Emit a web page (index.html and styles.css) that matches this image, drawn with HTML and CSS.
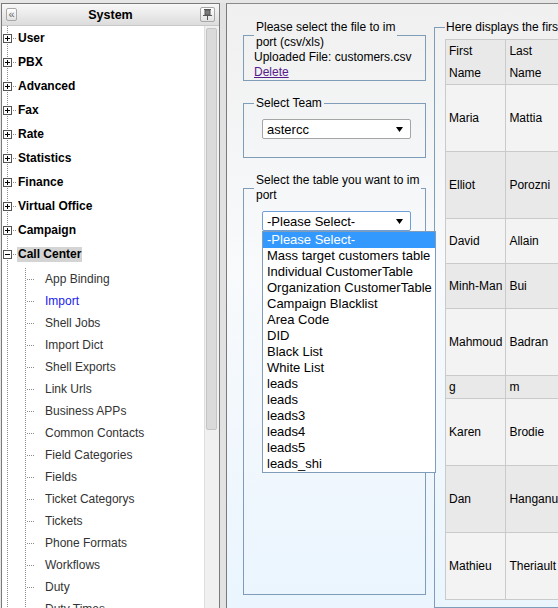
FILE: index.html
```html
<!DOCTYPE html>
<html lang="en">
<head>
<meta charset="UTF-8">
<meta name="viewport" content="width=device-width, initial-scale=1.0">
<title>Import</title>
<link rel="stylesheet" href="styles.css">
</head>
<body>

<div class="layout">
    <!-- Left navigation tree -->
    <div class="sidebar">
        <div class="sidebar-header">
            <span class="tool-btn collapse-btn">&laquo;</span>
            <span class="sidebar-title">System</span>
            <span class="tool-btn pin-btn">
                <svg width="9" height="11" viewBox="0 0 9 11"><path d="M1 0.5h7M2 1h5v5H2zM0 6.5h9M4.5 7v4" fill="#7a7a7a" stroke="#555" stroke-width="1"/></svg>
            </span>
        </div>
        <div class="sidebar-body">
            <div class="tree">
                <div class="node"><svg class="toggle" width="9" height="9" viewBox="0 0 9 9"><rect x="0.5" y="0.5" width="8" height="8" fill="#fff" stroke="#555"/><path d="M2 4.5h5M4.5 2v5" stroke="#000"/></svg><span class="branch"></span><span class="node-label">User</span></div>
                <div class="node"><svg class="toggle" width="9" height="9" viewBox="0 0 9 9"><rect x="0.5" y="0.5" width="8" height="8" fill="#fff" stroke="#555"/><path d="M2 4.5h5M4.5 2v5" stroke="#000"/></svg><span class="branch"></span><span class="node-label">PBX</span></div>
                <div class="node"><svg class="toggle" width="9" height="9" viewBox="0 0 9 9"><rect x="0.5" y="0.5" width="8" height="8" fill="#fff" stroke="#555"/><path d="M2 4.5h5M4.5 2v5" stroke="#000"/></svg><span class="branch"></span><span class="node-label">Advanced</span></div>
                <div class="node"><svg class="toggle" width="9" height="9" viewBox="0 0 9 9"><rect x="0.5" y="0.5" width="8" height="8" fill="#fff" stroke="#555"/><path d="M2 4.5h5M4.5 2v5" stroke="#000"/></svg><span class="branch"></span><span class="node-label">Fax</span></div>
                <div class="node"><svg class="toggle" width="9" height="9" viewBox="0 0 9 9"><rect x="0.5" y="0.5" width="8" height="8" fill="#fff" stroke="#555"/><path d="M2 4.5h5M4.5 2v5" stroke="#000"/></svg><span class="branch"></span><span class="node-label">Rate</span></div>
                <div class="node"><svg class="toggle" width="9" height="9" viewBox="0 0 9 9"><rect x="0.5" y="0.5" width="8" height="8" fill="#fff" stroke="#555"/><path d="M2 4.5h5M4.5 2v5" stroke="#000"/></svg><span class="branch"></span><span class="node-label">Statistics</span></div>
                <div class="node"><svg class="toggle" width="9" height="9" viewBox="0 0 9 9"><rect x="0.5" y="0.5" width="8" height="8" fill="#fff" stroke="#555"/><path d="M2 4.5h5M4.5 2v5" stroke="#000"/></svg><span class="branch"></span><span class="node-label">Finance</span></div>
                <div class="node"><svg class="toggle" width="9" height="9" viewBox="0 0 9 9"><rect x="0.5" y="0.5" width="8" height="8" fill="#fff" stroke="#555"/><path d="M2 4.5h5M4.5 2v5" stroke="#000"/></svg><span class="branch"></span><span class="node-label">Virtual Office</span></div>
                <div class="node"><svg class="toggle" width="9" height="9" viewBox="0 0 9 9"><rect x="0.5" y="0.5" width="8" height="8" fill="#fff" stroke="#555"/><path d="M2 4.5h5M4.5 2v5" stroke="#000"/></svg><span class="branch"></span><span class="node-label">Campaign</span></div>
                <div class="node"><svg class="toggle" width="9" height="9" viewBox="0 0 9 9"><rect x="0.5" y="0.5" width="8" height="8" fill="#fff" stroke="#555"/><path d="M2 4.5h5" stroke="#000"/></svg><span class="branch"></span><span class="node-label selected">Call Center</span></div>
                <div class="children">
                    <a class="leaf" href="#">App Binding</a>
                    <a class="leaf current" href="#">Import</a>
                    <a class="leaf" href="#">Shell Jobs</a>
                    <a class="leaf" href="#">Import Dict</a>
                    <a class="leaf" href="#">Shell Exports</a>
                    <a class="leaf" href="#">Link Urls</a>
                    <a class="leaf" href="#">Business APPs</a>
                    <a class="leaf" href="#">Common Contacts</a>
                    <a class="leaf" href="#">Field Categories</a>
                    <a class="leaf" href="#">Fields</a>
                    <a class="leaf" href="#">Ticket Categorys</a>
                    <a class="leaf" href="#">Tickets</a>
                    <a class="leaf" href="#">Phone Formats</a>
                    <a class="leaf" href="#">Workflows</a>
                    <a class="leaf" href="#">Duty</a>
                    <a class="leaf" href="#">Duty Times</a>
                </div>
            </div>
            <div class="scrollbar"><div class="scroll-thumb"></div></div>
        </div>
    </div>

    <div class="splitter"></div>

    <!-- Import page -->
    <div class="main">
        <div class="form-col">
            <fieldset class="panel file-panel">
                <legend>Please select the file to im<br>port (csv/xls)</legend>
                <div>Uploaded File: customers.csv</div>
                <a class="delete-link" href="#">Delete</a>
            </fieldset>

            <fieldset class="panel team-panel">
                <legend>Select Team</legend>
                <div class="select-wrap">
                    <div class="select-box">
                        <span>astercc</span>
                        <svg width="7" height="5" viewBox="0 0 7 5"><path d="M0 0h7L3.5 5z" fill="#000"/></svg>
                    </div>
                </div>
            </fieldset>

            <fieldset class="panel table-panel">
                <legend>Select the table you want to im<br>port</legend>
                <div class="select-wrap">
                    <div class="select-box focused">
                        <span>-Please Select-</span>
                        <svg width="7" height="5" viewBox="0 0 7 5"><path d="M0 0h7L3.5 5z" fill="#000"/></svg>
                    </div>
                    <ul class="dropdown">
                        <li class="active">-Please Select-</li>
                        <li>Mass target customers table</li>
                        <li>Individual CustomerTable</li>
                        <li>Organization CustomerTable</li>
                        <li>Campaign Blacklist</li>
                        <li>Area Code</li>
                        <li>DID</li>
                        <li>Black List</li>
                        <li>White List</li>
                        <li>leads</li>
                        <li>leads</li>
                        <li>leads3</li>
                        <li>leads4</li>
                        <li>leads5</li>
                        <li>leads_shi</li>
                    </ul>
                </div>
            </fieldset>
        </div>

        <fieldset class="panel preview-panel">
            <legend>Here displays the first 10 records</legend>
            <table class="preview-table">
                <colgroup>
                    <col class="col-first">
                    <col class="col-last">
                </colgroup>
                <tr class="row-mid head"><td>First<br>Name</td><td>Last<br>Name</td></tr>
                <tr class="row-tall"><td>Maria</td><td>Mattia</td></tr>
                <tr class="row-tall alt"><td>Elliot</td><td>Porozni</td></tr>
                <tr class="row-mid"><td>David</td><td>Allain</td></tr>
                <tr class="row-mid alt"><td>Minh-Man</td><td>Bui</td></tr>
                <tr class="row-tall"><td>Mahmoud</td><td>Badran</td></tr>
                <tr class="row-short alt"><td>g</td><td>m</td></tr>
                <tr class="row-tall"><td>Karen</td><td>Brodie</td></tr>
                <tr class="row-tall alt"><td>Dan</td><td>Hanganu</td></tr>
                <tr class="row-tall"><td>Mathieu</td><td>Theriault</td></tr>
            </table>
        </fieldset>
    </div>
</div>

</body>
</html>
```

FILE: styles.css
```css
body {
    margin: 0;
    padding: 3px 0 0 1px;
    height: 608px;
    box-sizing: border-box;
    overflow: hidden;
    background-color: #e6e6e6;
    font-family: "Liberation Sans", Arial, sans-serif;
    font-size: 12px;
    color: #000;
}

.layout {
    display: flex;
    height: 605px;
}

/* Sidebar */
.sidebar {
    width: 219px;
    flex: none;
    box-sizing: border-box;
    border: 1px solid #7a7a7a;
    border-bottom: none;
    background-color: white;
    display: flex;
    flex-direction: column;
}

.sidebar-header {
    height: 22px;
    flex: none;
    box-sizing: border-box;
    border-bottom: 1px solid #c8c8c8;
    background: linear-gradient(#f8f8f8, #dcdcdc);
    display: flex;
    align-items: center;
    padding: 0 2px;
}

.tool-btn {
    box-sizing: border-box;
    display: flex;
    align-items: center;
    justify-content: center;
    border: 1px solid #a8a8a8;
    border-radius: 2px;
    background: linear-gradient(#ffffff, #e2e2e2);
    color: #666;
}

.collapse-btn {
    width: 11px;
    height: 13px;
    margin-left: 2px;
    font-size: 11px;
    line-height: 11px;
}

.pin-btn {
    width: 15px;
    height: 15px;
    margin-right: 2px;
}

.sidebar-title {
    flex: 1;
    text-align: center;
    padding-left: 4px;
    font-weight: bold;
    font-size: 12.5px;
}

.sidebar-body {
    flex: 1;
    min-height: 0;
    display: flex;
}

.tree {
    flex: 1;
    overflow: hidden;
    background: repeating-linear-gradient(to bottom, #8c8c8c 0 1px, transparent 1px 2px) 5px 0 / 1px 100% no-repeat;
}

.node {
    height: 24px;
    display: flex;
    align-items: center;
}

.toggle {
    display: block;
    margin-left: 1px;
    flex: none;
}

.branch {
    width: 5px;
    height: 1px;
    background: repeating-linear-gradient(to right, transparent 0 1px, #8c8c8c 1px 2px);
}

.node-label {
    font-weight: bold;
    padding: 0 1px;
    line-height: 15px;
}

.node-label.selected {
    background-color: #d4d4d4;
}

.children {
    margin-top: 2px;
    background: repeating-linear-gradient(to bottom, #8c8c8c 0 1px, transparent 1px 2px) 23px 0 / 1px 100% no-repeat;
}

.leaf {
    display: block;
    height: 22px;
    line-height: 22px;
    padding-left: 43px;
    color: #333;
    text-decoration: none;
    background: repeating-linear-gradient(to right, transparent 0 1px, #8c8c8c 1px 2px) 24px 11px / 8px 1px no-repeat;
}

.leaf.current {
    color: #2020ee;
}

.scrollbar {
    width: 15px;
    flex: none;
    box-sizing: border-box;
    border-left: 1px solid #dedede;
    background-color: #f0f0f0;
    padding: 2px 2px 0 1px;
}

.scroll-thumb {
    height: 402px;
    box-sizing: border-box;
    border: 1px solid #c4c4c4;
    border-radius: 2px;
    background-color: #dadada;
}

.splitter {
    width: 6px;
    flex: none;
    background-color: #e2e2e2;
}

/* Main area */
.main {
    flex: 1;
    min-width: 0;
    display: flex;
    gap: 8px;
    padding: 16px 0 0 16px;
    border-left: 1px solid #7a7a7a;
    border-top: 1px solid #8a8a8a;
    background: linear-gradient(to bottom, #f0f0f0 0%, #f8fafc 45%, #eaf5fe 100%);
    overflow: hidden;
}

.form-col {
    width: 183px;
    flex: none;
    display: flex;
    flex-direction: column;
    padding-bottom: 13px;
    box-sizing: border-box;
}

.panel {
    margin: 0;
    padding: 0 10px;
    min-width: 0;
    border: 1px solid #7f9db9;
    line-height: 15px;
}

.panel legend {
    padding: 0 2px;
    line-height: 15px;
    white-space: nowrap;
}

.team-panel {
    margin-top: 15px;
    padding-bottom: 18px;
}

.table-panel {
    margin-top: 15px;
    flex: 1;
}

.delete-link {
    color: #551a8b;
}

.select-wrap {
    position: relative;
    width: 149px;
    margin: 8px 0 0 8px;
}

.select-box {
    height: 20px;
    box-sizing: border-box;
    border: 1px solid #a5a5a5;
    border-radius: 2px;
    background-color: white;
    font-size: 13px;
    display: flex;
    align-items: center;
    justify-content: space-between;
    padding: 0 7px 0 4px;
}

.select-box.focused {
    border-color: #6f9fd8;
}

/* Open option list */
.dropdown {
    position: absolute;
    top: 100%;
    left: 0;
    z-index: 2;
    width: 174px;
    box-sizing: border-box;
    margin: 0;
    padding: 0;
    list-style: none;
    border: 1px solid #7f9db9;
    background-color: white;
    font-size: 13px;
}

.dropdown li {
    height: 16px;
    line-height: 16px;
    padding-left: 4px;
    white-space: nowrap;
}

.dropdown li.active {
    background-color: #3399ff;
    color: white;
}

.preview-panel {
    width: 220px;
    flex: none;
}

.preview-panel legend {
    padding: 0 1px;
}

.preview-table {
    margin-top: 4px;
    border-collapse: collapse;
    table-layout: fixed;
}

.col-first {
    width: 58px;
}

.col-last {
    width: 75px;
}

.preview-table td {
    border: 1px solid #cacaca;
    padding: 0 3px;
    vertical-align: middle;
    white-space: nowrap;
    background-color: #f3f3f3;
}

.preview-table tr.alt td,
.preview-table tr.head td {
    background-color: #e9e9e9;
}

.preview-table tr.head td {
    line-height: 22px;
}

.row-short {
    height: 23px;
}

.row-mid {
    height: 45px;
}

.row-tall {
    height: 67px;
}
```
